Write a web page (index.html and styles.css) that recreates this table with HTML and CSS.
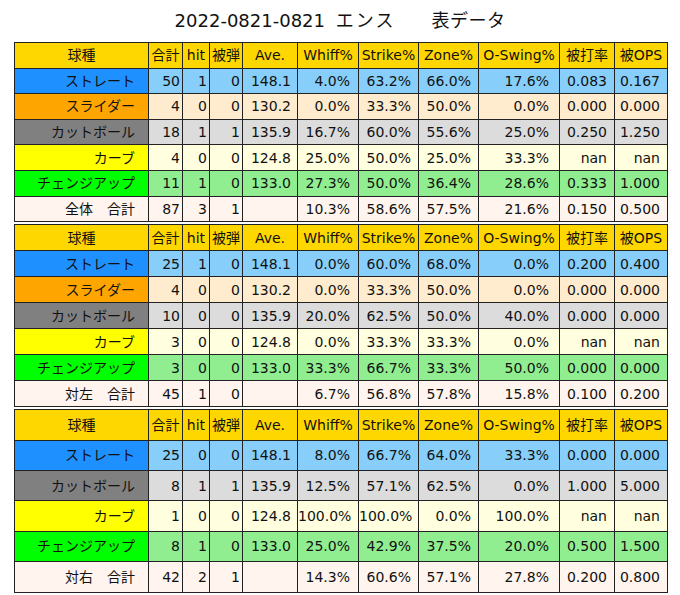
FILE: index.html
```html
<!DOCTYPE html>
<html lang="ja">
<head>
<meta charset="utf-8">
<title>表データ</title>
<link rel="stylesheet" href="styles.css">
</head>
<body>
<div class="title">2022-0821-0821 <span class="name">エンス</span>　　<span class="kind">表データ</span></div>
<div class="tables">
<table class="grid g1">
<colgroup><col class="c1"><col class="c2"><col class="c3"><col class="c4"><col class="c5"><col class="c6"><col class="c7"><col class="c8"><col class="c9"><col class="c10"><col class="c11"></colgroup>
<tr class="hdr"><th>球種</th><th>合計</th><th>hit</th><th>被弾</th><th>Ave.</th><th>Whiff%</th><th>Strike%</th><th>Zone%</th><th>O-Swing%</th><th>被打率</th><th>被OPS</th></tr>
<tr class="st"><td class="lab">ストレート</td><td>50</td><td>1</td><td>0</td><td>148.1</td><td>4.0%</td><td>63.2%</td><td>66.0%</td><td>17.6%</td><td>0.083</td><td>0.167</td></tr>
<tr class="sl"><td class="lab">スライダー</td><td>4</td><td>0</td><td>0</td><td>130.2</td><td>0.0%</td><td>33.3%</td><td>50.0%</td><td>0.0%</td><td>0.000</td><td>0.000</td></tr>
<tr class="ct"><td class="lab">カットボール</td><td>18</td><td>1</td><td>1</td><td>135.9</td><td>16.7%</td><td>60.0%</td><td>55.6%</td><td>25.0%</td><td>0.250</td><td>1.250</td></tr>
<tr class="cv"><td class="lab">カーブ</td><td>4</td><td>0</td><td>0</td><td>124.8</td><td>25.0%</td><td>50.0%</td><td>25.0%</td><td>33.3%</td><td>nan</td><td>nan</td></tr>
<tr class="ch"><td class="lab">チェンジアップ</td><td>11</td><td>1</td><td>0</td><td>133.0</td><td>27.3%</td><td>50.0%</td><td>36.4%</td><td>28.6%</td><td>0.333</td><td>1.000</td></tr>
<tr class="tot"><td class="lab">全体　合計</td><td>87</td><td>3</td><td>1</td><td></td><td>10.3%</td><td>58.6%</td><td>57.5%</td><td>21.6%</td><td>0.150</td><td>0.500</td></tr>
</table>
<table class="grid g2">
<colgroup><col class="c1"><col class="c2"><col class="c3"><col class="c4"><col class="c5"><col class="c6"><col class="c7"><col class="c8"><col class="c9"><col class="c10"><col class="c11"></colgroup>
<tr class="hdr"><th>球種</th><th>合計</th><th>hit</th><th>被弾</th><th>Ave.</th><th>Whiff%</th><th>Strike%</th><th>Zone%</th><th>O-Swing%</th><th>被打率</th><th>被OPS</th></tr>
<tr class="st"><td class="lab">ストレート</td><td>25</td><td>1</td><td>0</td><td>148.1</td><td>0.0%</td><td>60.0%</td><td>68.0%</td><td>0.0%</td><td>0.200</td><td>0.400</td></tr>
<tr class="sl"><td class="lab">スライダー</td><td>4</td><td>0</td><td>0</td><td>130.2</td><td>0.0%</td><td>33.3%</td><td>50.0%</td><td>0.0%</td><td>0.000</td><td>0.000</td></tr>
<tr class="ct"><td class="lab">カットボール</td><td>10</td><td>0</td><td>0</td><td>135.9</td><td>20.0%</td><td>62.5%</td><td>50.0%</td><td>40.0%</td><td>0.000</td><td>0.000</td></tr>
<tr class="cv"><td class="lab">カーブ</td><td>3</td><td>0</td><td>0</td><td>124.8</td><td>0.0%</td><td>33.3%</td><td>33.3%</td><td>0.0%</td><td>nan</td><td>nan</td></tr>
<tr class="ch"><td class="lab">チェンジアップ</td><td>3</td><td>0</td><td>0</td><td>133.0</td><td>33.3%</td><td>66.7%</td><td>33.3%</td><td>50.0%</td><td>0.000</td><td>0.000</td></tr>
<tr class="tot"><td class="lab">対左　合計</td><td>45</td><td>1</td><td>0</td><td></td><td>6.7%</td><td>56.8%</td><td>57.8%</td><td>15.8%</td><td>0.100</td><td>0.200</td></tr>
</table>
<table class="grid g3">
<colgroup><col class="c1"><col class="c2"><col class="c3"><col class="c4"><col class="c5"><col class="c6"><col class="c7"><col class="c8"><col class="c9"><col class="c10"><col class="c11"></colgroup>
<tr class="hdr"><th>球種</th><th>合計</th><th>hit</th><th>被弾</th><th>Ave.</th><th>Whiff%</th><th>Strike%</th><th>Zone%</th><th>O-Swing%</th><th>被打率</th><th>被OPS</th></tr>
<tr class="st"><td class="lab">ストレート</td><td>25</td><td>0</td><td>0</td><td>148.1</td><td>8.0%</td><td>66.7%</td><td>64.0%</td><td>33.3%</td><td>0.000</td><td>0.000</td></tr>
<tr class="ct"><td class="lab">カットボール</td><td>8</td><td>1</td><td>1</td><td>135.9</td><td>12.5%</td><td>57.1%</td><td>62.5%</td><td>0.0%</td><td>1.000</td><td>5.000</td></tr>
<tr class="cv"><td class="lab">カーブ</td><td>1</td><td>0</td><td>0</td><td>124.8</td><td>100.0%</td><td>100.0%</td><td>0.0%</td><td>100.0%</td><td>nan</td><td>nan</td></tr>
<tr class="ch"><td class="lab">チェンジアップ</td><td>8</td><td>1</td><td>0</td><td>133.0</td><td>25.0%</td><td>42.9%</td><td>37.5%</td><td>20.0%</td><td>0.500</td><td>1.500</td></tr>
<tr class="tot"><td class="lab">対右　合計</td><td>42</td><td>2</td><td>1</td><td></td><td>14.3%</td><td>60.6%</td><td>57.1%</td><td>27.8%</td><td>0.200</td><td>0.800</td></tr>
</table>
</div>
</body>
</html>
```
FILE: styles.css
```css
html, body {
  margin: 0;
  padding: 0;
  background: #ffffff;
}
body {
  font-family: "DejaVu Sans", "Noto Sans CJK JP", sans-serif;
  color: #111111;
}
.title {
  box-sizing: border-box;
  height: 42px;
  padding-top: 10px;
  font-size: 18px;
  line-height: 22px;
  text-align: center;
  white-space: pre;
}
.title .name {
  margin-left: 5px;
  letter-spacing: 2px;
}
.title .kind {
  letter-spacing: 0.5px;
}
.tables {
  display: flex;
  flex-direction: column;
  gap: 2px;
  padding-left: 14px;
}
.grid {
  border-collapse: collapse;
  table-layout: fixed;
  width: 653px;
  font-size: 14px;
  line-height: 16px;
}
.grid th, .grid td {
  border: 1px solid #222222;
  padding: 0;
  white-space: nowrap;
  overflow: visible;
  vertical-align: middle;
}
.c1 { width: 134px; }
.c2 { width: 34px; }
.c3 { width: 27px; }
.c4 { width: 33px; }
.c5 { width: 55px; }
.c6 { width: 61px; }
.c7 { width: 60px; }
.c8 { width: 60px; }
.c9 { width: 81px; }
.c10 { width: 55px; }
.c11 { width: 53px; }

.g1 tr { height: 25.6px; }
.g2 tr { height: 26px; }
.g3 tr { height: 30.4px; }

.grid th {
  font-weight: normal;
  text-align: center;
  background: #ffd700;
}
.grid td {
  text-align: right;
}
.grid td:nth-child(1) { padding-right: 13px; }
.grid td:nth-child(2) { padding-right: 2px; }
.grid td:nth-child(3) { padding-right: 2px; }
.grid td:nth-child(4) { padding-right: 2px; }
.grid td:nth-child(5) { padding-right: 6px; }
.grid td:nth-child(6) { padding-right: 8px; }
.grid td:nth-child(7) { padding-right: 7px; }
.grid td:nth-child(8) { padding-right: 7px; }
.grid td:nth-child(9) { padding-right: 10px; }
.grid td:nth-child(10) { padding-right: 7px; }
.grid td:nth-child(11) { padding-right: 7px; }

.st td { background: #87cefa; }
.st td.lab { background: #1e90ff; }
.sl td { background: #ffebcd; }
.sl td.lab { background: #ffa500; }
.ct td { background: #dcdcdc; }
.ct td.lab { background: #808080; }
.cv td { background: #ffffe0; }
.cv td.lab { background: #ffff00; }
.ch td { background: #90ee90; }
.ch td.lab { background: #00ff00; }
.tot td { background: #fff5ee; }
```
